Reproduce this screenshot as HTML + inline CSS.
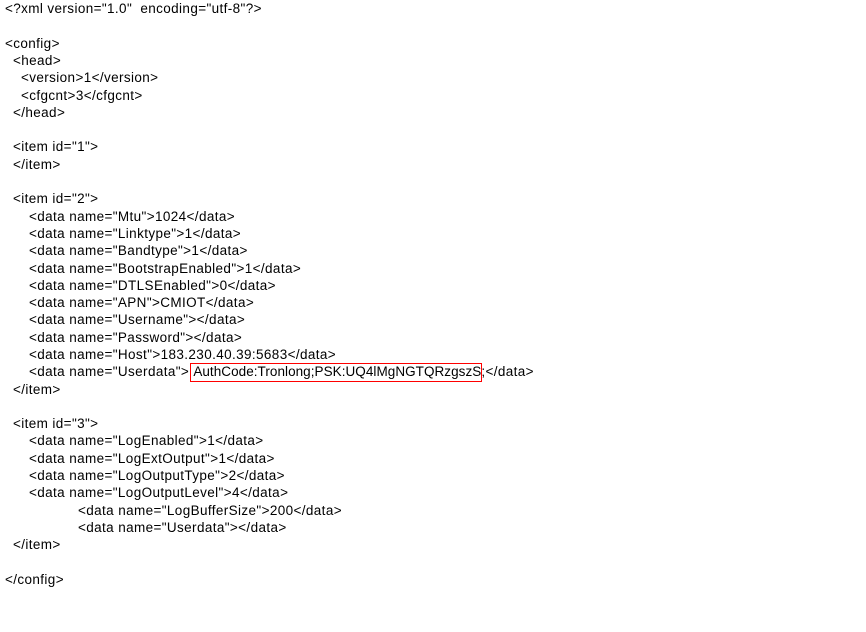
<!DOCTYPE html>
<html><head><meta charset="utf-8"><style>
body{margin:0;width:866px;height:632px;background:#fff;overflow:hidden;font-family:"Liberation Sans","Noto Sans CJK SC",sans-serif;font-size:13.5px;color:#000;letter-spacing:0.38px}
.l{position:absolute;white-space:pre;line-height:17px;height:17px}
.b{position:absolute;border:1.5px solid #ff0000;box-sizing:border-box}
</style></head><body>
<div class="l" style="left:5px;top:0px">&lt;?xml version="1.0"  encoding="utf-8"?&gt;</div>
<div class="l" style="left:5px;top:35px">&lt;config&gt;</div>
<div class="l" style="left:13px;top:52px">&lt;head&gt;</div>
<div class="l" style="left:21px;top:69px">&lt;version&gt;1&lt;/version&gt;</div>
<div class="l" style="left:21px;top:87px">&lt;cfgcnt&gt;3&lt;/cfgcnt&gt;</div>
<div class="l" style="left:13px;top:104px">&lt;/head&gt;</div>
<div class="l" style="left:13px;top:138px">&lt;item id="1"&gt;</div>
<div class="l" style="left:13px;top:156px">&lt;/item&gt;</div>
<div class="l" style="left:13px;top:190px">&lt;item id="2"&gt;</div>
<div class="l" style="left:29px;top:208px">&lt;data name="Mtu"&gt;1024&lt;/data&gt;</div>
<div class="l" style="left:29px;top:225px">&lt;data name="Linktype"&gt;1&lt;/data&gt;</div>
<div class="l" style="left:29px;top:242px">&lt;data name="Bandtype"&gt;1&lt;/data&gt;</div>
<div class="l" style="left:29px;top:260px">&lt;data name="BootstrapEnabled"&gt;1&lt;/data&gt;</div>
<div class="l" style="left:29px;top:277px">&lt;data name="DTLSEnabled"&gt;0&lt;/data&gt;</div>
<div class="l" style="left:29px;top:294px">&lt;data name="APN"&gt;CMIOT&lt;/data&gt;</div>
<div class="l" style="left:29px;top:311px">&lt;data name="Username"&gt;&lt;/data&gt;</div>
<div class="l" style="left:29px;top:329px">&lt;data name="Password"&gt;&lt;/data&gt;</div>
<div class="l" style="left:29px;top:346px">&lt;data name="Host"&gt;183.230.40.39:5683&lt;/data&gt;</div>
<div class="l" style="left:29px;top:363px">&lt;data name="Userdata"&gt; <span style="letter-spacing:0.05px">AuthCode:Tronlong;PSK:UQ4lMgNGTQRzgszS</span>;&lt;/data&gt;</div>
<div class="b" style="left:190px;top:363px;width:292px;height:19px"></div>
<div class="l" style="left:13px;top:381px">&lt;/item&gt;</div>
<div class="l" style="left:13px;top:415px">&lt;item id="3"&gt;</div>
<div class="l" style="left:29px;top:432px">&lt;data name="LogEnabled"&gt;1&lt;/data&gt;</div>
<div class="l" style="left:29px;top:450px">&lt;data name="LogExtOutput"&gt;1&lt;/data&gt;</div>
<div class="l" style="left:29px;top:467px">&lt;data name="LogOutputType"&gt;2&lt;/data&gt;</div>
<div class="l" style="left:29px;top:484px">&lt;data name="LogOutputLevel"&gt;4&lt;/data&gt;</div>
<div class="l" style="left:78px;top:502px">&lt;data name="LogBufferSize"&gt;200&lt;/data&gt;</div>
<div class="l" style="left:78px;top:519px">&lt;data name="Userdata"&gt;&lt;/data&gt;</div>
<div class="l" style="left:13px;top:536px">&lt;/item&gt;</div>
<div class="l" style="left:5px;top:571px">&lt;/config&gt;</div>
</body></html>
